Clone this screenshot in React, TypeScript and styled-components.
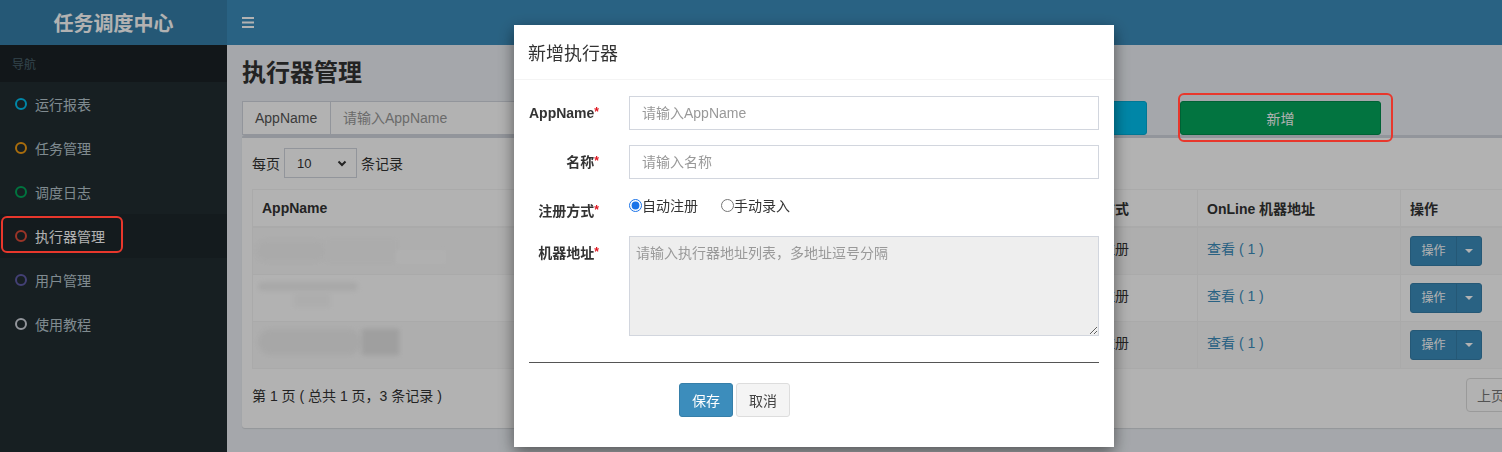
import React from 'react';
import styled, { createGlobalStyle } from 'styled-components';

const FONT = `"Liberation Sans", "Noto Sans CJK SC", sans-serif`;

const Global = createGlobalStyle`
  html, body { margin: 0; padding: 0; width: 1502px; height: 452px; overflow: hidden; }
  body { font-family: ${FONT}; font-size: 14px; color: #333; background: #ecf0f5; }
  * { box-sizing: border-box; }
`;

const Page = styled.div`
  width: 1590px;
  height: 452px;
  display: flex;
  flex-direction: column;
  background: #ecf0f5;
`;

const Header = styled.header`
  display: flex;
  height: 45px;
  flex-shrink: 0;
`;

const Logo = styled.div`
  width: 227px;
  background: #367fa9;
  color: #fff;
  font-size: 20px;
  font-weight: 700;
  display: flex;
  align-items: center;
  justify-content: center;
`;

const Navbar = styled.div`
  flex: 1;
  background: #3c8dbc;
  display: flex;
  align-items: center;
  padding-left: 15px;
`;

const Main = styled.div`
  display: flex;
  flex: 1;
  min-height: 0;
`;

const Sidebar = styled.aside`
  width: 227px;
  flex-shrink: 0;
  background: #222d32;
`;

const NavHeader = styled.div`
  height: 37px;
  background: #1a2226;
  color: #4b646f;
  font-size: 12px;
  padding: 0 12px;
  display: flex;
  align-items: center;
`;

const NavItem = styled.div<{ $active?: boolean }>`
  height: 44px;
  display: flex;
  align-items: center;
  gap: 8px;
  padding-left: 15px;
  padding-bottom: 1px;
  font-size: 14px;
  color: ${(p) => (p.$active ? '#fff' : '#b8c7ce')};
  background: ${(p) => (p.$active ? '#1e282c' : 'transparent')};
`;

const Dot = styled.span<{ $color: string }>`
  width: 12px;
  height: 12px;
  border-radius: 50%;
  border: 2px solid ${(p) => p.$color};
  flex-shrink: 0;
`;

const Content = styled.section`
  flex: 1;
  padding: 15px 15px 0;
  display: flex;
  flex-direction: column;
`;

const Title = styled.h1`
  margin: 0;
  font-size: 24px;
  line-height: 26px;
  font-weight: 700;
  color: #333;
`;

const SearchRow = styled.div`
  margin-top: 15px;
  height: 34px;
  display: flex;
`;

const InputGroup = styled.div`
  width: 672px;
  display: flex;
`;

const Addon = styled.span`
  width: 89px;
  border: 1px solid #d2d6de;
  background: #fff;
  display: flex;
  align-items: center;
  padding: 0 12px;
  color: #555;
`;

const TextInput = styled.input`
  flex: 1;
  height: 34px;
  border: 1px solid #d2d6de;
  border-left: none;
  padding: 6px 12px;
  font-family: ${FONT};
  font-size: 14px;
  outline: none;
  &::placeholder { color: #999; }
`;

const BlockButton = styled.button<{ $bg: string; $border: string; $gap: number }>`
  width: 201px;
  height: 34px;
  margin-left: ${(p) => p.$gap}px;
  background: ${(p) => p.$bg};
  border: 1px solid ${(p) => p.$border};
  border-radius: 3px;
  color: #fff;
  font-family: ${FONT};
  font-size: 14px;
`;

const Box = styled.div`
  background: #fff;
  border-top: 3px solid #d2d6de;
  border-radius: 3px;
  box-shadow: 0 1px 1px rgba(0, 0, 0, 0.1);
  padding: 10px 10px 16px;
`;

const LengthRow = styled.div`
  display: flex;
  align-items: center;
  gap: 4px;
  height: 30px;
`;

const SelectBox = styled.div`
  width: 73px;
  height: 30px;
  border: 1px solid #d2d6de;
  background: #fff;
  display: flex;
  align-items: center;
  justify-content: space-between;
  padding: 0 9px 0 12px;
  font-size: 13px;
`;

const Table = styled.table`
  margin-top: 11px;
  width: 100%;
  border-collapse: collapse;
  table-layout: fixed;
  border: 1px solid #f4f4f4;
`;

const Th = styled.th`
  height: 37px;
  padding: 8px 9px;
  text-align: left;
  font-weight: 700;
  border: 1px solid #f4f4f4;
  border-bottom-width: 2px;
`;

const Tr = styled.tr<{ $striped?: boolean }>`
  background: ${(p) => (p.$striped ? '#f9f9f9' : '#fff')};
`;

const Td = styled.td`
  height: 47px;
  padding: 8px 9px;
  vertical-align: top;
  border: 1px solid #f4f4f4;
  line-height: 20px;
  white-space: nowrap;
  overflow: hidden;
`;

const CellText = styled.span`
  display: inline-block;
  padding-top: 3px;
`;

const Link = styled.a`
  display: inline-block;
  padding-top: 3px;
  color: #3c8dbc;
  text-decoration: none;
`;

const Blur = styled.div<{ $w: number; $h: number; $c: string; $r?: number; $mt?: number; $ml?: number }>`
  width: ${(p) => p.$w}px;
  height: ${(p) => p.$h}px;
  background: ${(p) => p.$c};
  border-radius: ${(p) => p.$r ?? 0}px;
  margin-top: ${(p) => p.$mt ?? 0}px;
  margin-left: ${(p) => p.$ml ?? 0}px;
  filter: blur(2px);
  flex-shrink: 0;
`;

const BlurRow = styled.div`
  display: flex;
  align-items: flex-start;
`;

const SplitButton = styled.div`
  display: inline-flex;
  height: 30px;
  border-radius: 3px;
  overflow: hidden;
  background: #3c8dbc;
  border: 1px solid #367fa9;
`;

const SplitMain = styled.span`
  width: 45px;
  display: flex;
  align-items: center;
  justify-content: center;
  color: #fff;
  font-size: 12px;
`;

const SplitCaret = styled.span`
  width: 25px;
  display: flex;
  align-items: center;
  justify-content: center;
  border-left: 1px solid #367fa9;
  &::after {
    content: '';
    border-top: 4px solid #fff;
    border-left: 4px solid transparent;
    border-right: 4px solid transparent;
  }
`;

const Footer = styled.div`
  margin-top: 9px;
  height: 34px;
  display: flex;
  align-items: center;
  justify-content: space-between;
`;

const Pager = styled.div`
  display: flex;
`;

const PageBtn = styled.span<{ $first?: boolean }>`
  width: 50px;
  height: 34px;
  display: flex;
  align-items: center;
  justify-content: center;
  border: 1px solid #ddd;
  margin-left: ${(p) => (p.$first ? 0 : -1)}px;
  border-radius: ${(p) => (p.$first ? '4px 0 0 4px' : '0 4px 4px 0')};
  background: #fff;
  color: #777;
`;

const Backdrop = styled.div`
  position: fixed;
  inset: 0;
  background: rgba(0, 0, 0, 0.3);
  z-index: 5;
`;

const Modal = styled.div`
  position: fixed;
  top: 25px;
  left: 514px;
  width: 600px;
  background: #fff;
  box-shadow: 0 5px 15px rgba(0, 0, 0, 0.5);
  z-index: 10;
`;

const ModalHeader = styled.div`
  height: 55px;
  padding: 0 14px;
  display: flex;
  align-items: center;
  border-bottom: 1px solid #f4f4f4;
  font-size: 18px;
  color: #333;
`;

const ModalBody = styled.div`
  padding: 16px 15px 15px;
`;

const FormGroup = styled.div`
  display: grid;
  grid-template-columns: 70px 470px;
  column-gap: 30px;
  margin-bottom: 15px;
`;

const Label = styled.label`
  text-align: right;
  padding-top: 7px;
  font-weight: 700;
  line-height: 20px;
  white-space: nowrap;
`;

const Req = styled.span`
  color: #e0141e;
  font-size: 12px;
  vertical-align: top;
  position: relative;
  top: -1px;
`;

const FormInput = styled.input`
  height: 34px;
  border: 1px solid #d2d6de;
  padding: 6px 12px;
  font-family: ${FONT};
  font-size: 14px;
  outline: none;
  &::placeholder { color: #999; }
`;

const RadioLine = styled.div`
  display: flex;
  align-items: center;
  height: 20px;
  margin-top: 1px;
  gap: 23px;
`;

const RadioLabel = styled.label`
  display: flex;
  align-items: center;
  font-size: 14px;
  input { margin: 0 0 0 0; width: 13px; height: 13px; accent-color: #1a73e8; }
`;

const TextArea = styled.textarea`
  height: 100px;
  border: 1px solid #d2d6de;
  background: #eee;
  padding: 6px;
  font-family: ${FONT};
  font-size: 14px;
  line-height: 20px;
  resize: vertical;
  outline: none;
  &::placeholder { color: #999; }
`;

const Divider = styled.hr`
  margin: 26px 0 20px;
  border: none;
  border-top: 1px solid #555;
`;

const Actions = styled.div`
  display: flex;
  gap: 3px;
  padding-left: 150px;
  margin-bottom: 15px;
`;

const Btn = styled.button<{ $primary?: boolean }>`
  height: 34px;
  padding: 6px 12px;
  font-family: ${FONT};
  font-size: 14px;
  border-radius: 3px;
  border: 1px solid ${(p) => (p.$primary ? '#367fa9' : '#ddd')};
  background: ${(p) => (p.$primary ? '#3c8dbc' : '#f4f4f4')};
  color: ${(p) => (p.$primary ? '#fff' : '#444')};
`;

const Highlight = styled.div<{ $x: number; $y: number; $w: number; $h: number }>`
  position: fixed;
  left: ${(p) => p.$x}px;
  top: ${(p) => p.$y}px;
  width: ${(p) => p.$w}px;
  height: ${(p) => p.$h}px;
  border: 2.5px solid #e8372c;
  border-radius: 6px;
  z-index: 20;
`;

const navItems = [
  { label: '运行报表', color: '#00c0ef' },
  { label: '任务管理', color: '#f39c12' },
  { label: '调度日志', color: '#00a65a' },
  { label: '执行器管理', color: '#dd4b39', active: true },
  { label: '用户管理', color: '#605ca8' },
  { label: '使用教程', color: '#d2d6de' },
];

const Hamburger = () => (
  <svg width="12" height="11" viewBox="0 0 12 11">
    <rect x="0" y="0" width="12" height="2" fill="#fff" />
    <rect x="0" y="4.5" width="12" height="2" fill="#fff" />
    <rect x="0" y="9" width="12" height="2" fill="#fff" />
  </svg>
);

const Chevron = () => (
  <svg width="10" height="7" viewBox="0 0 10 7">
    <polyline points="1.5,1.5 5,5 8.5,1.5" fill="none" stroke="#333" strokeWidth="2" />
  </svg>
);

const OpButton = () => (
  <SplitButton>
    <SplitMain>操作</SplitMain>
    <SplitCaret />
  </SplitButton>
);

export default function App() {
  return (
    <>
      <Global />
      <Page>
        <Header>
          <Logo>任务调度中心</Logo>
          <Navbar>
            <Hamburger />
          </Navbar>
        </Header>
        <Main>
          <Sidebar>
            <NavHeader>导航</NavHeader>
            {navItems.map((n) => (
              <NavItem key={n.label} $active={n.active}>
                <Dot $color={n.color} />
                {n.label}
              </NavItem>
            ))}
          </Sidebar>
          <Content>
            <Title>执行器管理</Title>
            <SearchRow>
              <InputGroup>
                <Addon>AppName</Addon>
                <TextInput placeholder="请输入AppName" />
              </InputGroup>
              <BlockButton $bg="#00c0ef" $border="#00acd6" $gap={32}>搜索</BlockButton>
              <BlockButton $bg="#03a65c" $border="#008d4c" $gap={33}>新增</BlockButton>
            </SearchRow>
            <Box>
              <LengthRow>
                每页
                <SelectBox>
                  10
                  <Chevron />
                </SelectBox>
                条记录
              </LengthRow>
              <Table>
                <colgroup>
                  <col style={{ width: 388 }} />
                  <col style={{ width: 423 }} />
                  <col style={{ width: 134 }} />
                  <col style={{ width: 203 }} />
                  <col />
                </colgroup>
                <thead>
                  <tr>
                    <Th>AppName</Th>
                    <Th>名称</Th>
                    <Th>注册方式</Th>
                    <Th>OnLine 机器地址</Th>
                    <Th>操作</Th>
                  </tr>
                </thead>
                <tbody>
                  <Tr $striped>
                    <Td>
                      <BlurRow>
                        <Blur $w={70} $h={22} $c="#f4f4f4" $r={10} $mt={4} $ml={-6} />
                        <Blur $w={70} $h={22} $c="#f6f6f6" $mt={4} />
                        <Blur $w={50} $h={14} $c="#fdfdfd" $mt={14} />
                      </BlurRow>
                    </Td>
                    <Td><CellText>执行器</CellText></Td>
                    <Td><CellText>自动注册</CellText></Td>
                    <Td><Link>查看 ( 1 )</Link></Td>
                    <Td><OpButton /></Td>
                  </Tr>
                  <Tr>
                    <Td>
                      <BlurRow>
                        <Blur $w={100} $h={9} $c="#f2f2f2" $r={5} $mt={-1} $ml={-4} />
                      </BlurRow>
                      <Blur $w={36} $h={14} $c="#f8f8f8" $ml={32} $mt={2} />
                    </Td>
                    <Td><CellText>执行器</CellText></Td>
                    <Td><CellText>自动注册</CellText></Td>
                    <Td><Link>查看 ( 1 )</Link></Td>
                    <Td><OpButton /></Td>
                  </Tr>
                  <Tr $striped>
                    <Td>
                      <BlurRow>
                        <Blur $w={104} $h={26} $c="#f0f0f0" $r={13} $mt={-1} $ml={-4} />
                        <Blur $w={37} $h={26} $c="#e4e4e4" $mt={-1} />
                      </BlurRow>
                    </Td>
                    <Td><CellText>执行器</CellText></Td>
                    <Td><CellText>自动注册</CellText></Td>
                    <Td><Link>查看 ( 1 )</Link></Td>
                    <Td><OpButton /></Td>
                  </Tr>
                </tbody>
              </Table>
              <Footer>
                <span>第 1 页 ( 总共 1 页，3 条记录 )</span>
                <Pager>
                  <PageBtn $first>上页</PageBtn>
                  <PageBtn>下页</PageBtn>
                </Pager>
              </Footer>
            </Box>
          </Content>
        </Main>
      </Page>

      <Backdrop />

      <Modal>
        <ModalHeader>新增执行器</ModalHeader>
        <ModalBody>
          <FormGroup>
            <Label>AppName<Req>*</Req></Label>
            <FormInput placeholder="请输入AppName" />
          </FormGroup>
          <FormGroup>
            <Label>名称<Req>*</Req></Label>
            <FormInput placeholder="请输入名称" />
          </FormGroup>
          <FormGroup>
            <Label>注册方式<Req>*</Req></Label>
            <RadioLine>
              <RadioLabel>
                <input type="radio" name="addressType" defaultChecked />
                自动注册
              </RadioLabel>
              <RadioLabel>
                <input type="radio" name="addressType" />
                手动录入
              </RadioLabel>
            </RadioLine>
          </FormGroup>
          <FormGroup>
            <Label>机器地址<Req>*</Req></Label>
            <TextArea placeholder="请输入执行器地址列表，多地址逗号分隔" readOnly />
          </FormGroup>
          <Divider />
          <Actions>
            <Btn $primary>保存</Btn>
            <Btn>取消</Btn>
          </Actions>
        </ModalBody>
      </Modal>

      <Highlight $x={1} $y={216} $w={122} $h={37} />
      <Highlight $x={1178} $y={93} $w={215} $h={49} />
    </>
  );
}
